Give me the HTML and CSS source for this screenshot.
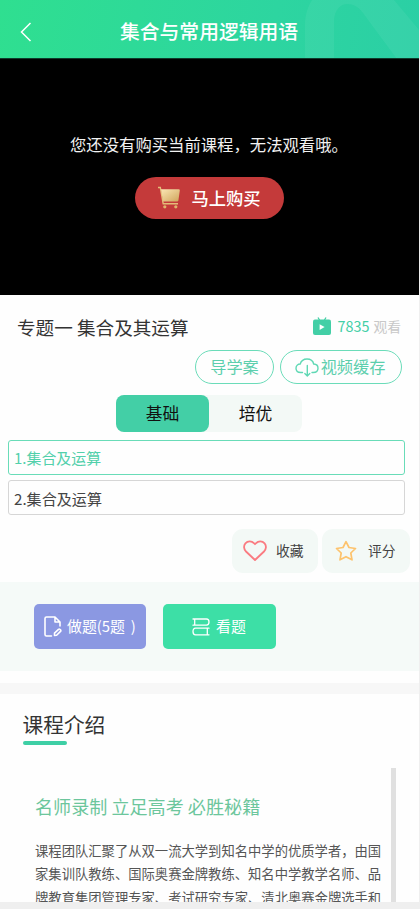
FILE: index.html
```html
<!DOCTYPE html>
<html lang="zh-CN">
<head>
<meta charset="utf-8">
<meta name="viewport" content="width=device-width, initial-scale=1">
<title>集合与常用逻辑用语</title>
<link rel="stylesheet" href="styles.css">
</head>
<body>
<main class="screen">
  <header class="header">
    <svg class="header-art" width="116" height="59" viewBox="0 0 116 59"><path d="M2 59V25C2 10 8 0 14-6H86L116 30V59H94L60 13C50-1 31 1 31 22V59Z" fill="#fff" fill-opacity=".055"/></svg>
    <svg class="back" width="12" height="20" viewBox="0 0 12 20"><path d="M10.5 1L1.5 10l9 9" fill="none" stroke="#fff" stroke-width="1.5"/></svg>
    <h1 class="header-title">集合与常用逻辑用语</h1>
  </header>

  <section class="player">
    <p class="notice">您还没有购买当前课程，无法观看哦。</p>
    <button class="buy">
      <svg width="24" height="24" viewBox="0 0 24 24">
        <defs><linearGradient id="gold" x1="0" y1="0" x2="1" y2="1"><stop offset="0" stop-color="#fbe7b5"/><stop offset="1" stop-color="#cfa45b"/></linearGradient></defs>
        <path d="M1 1.5h2.3L6.2 17.8H21" fill="none" stroke="#e4bd78" stroke-width="1.4"/>
        <path d="M4 3.2h17.6q1.4 0 1.2 1.3l-1.4 10q-.2 1-1.4 1H6.1z" fill="url(#gold)"/>
        <circle cx="7.8" cy="20.8" r="1.6" fill="#dfb56c"/><circle cx="18.8" cy="20.8" r="1.6" fill="#dfb56c"/>
      </svg>
      <span class="label">马上购买</span>
    </button>
  </section>

  <section class="lesson">
    <div class="lesson-head">
      <h2 class="lesson-title">专题一 集合及其运算</h2>
      <div class="views">
        <svg width="18" height="18" viewBox="0 0 18 18"><path d="M5 0.5l1.8 3M13 0.5l-1.8 3" stroke="#43cfa6" stroke-width="1.3"/><rect x="0" y="2.500" width="18" height="15.500" rx="2" fill="#43cfa6"/><path d="M6.6 7.2v5.8l5-2.9z" fill="#fff"/></svg>
        <span class="views-count">7835</span><span class="views-label">观看</span>
      </div>
    </div>
    <div class="pills">
      <button class="pill pill-guide"><span class="label">导学案</span></button>
      <button class="pill pill-cache">
        <svg width="24" height="19" viewBox="0 0 24 19" fill="none" stroke="#5fd8b4" stroke-width="1.4" stroke-linecap="round" stroke-linejoin="round"><path d="M7.5 14.5H5.8C2.8 14.5 1 12.6 1 10.2 1 7.8 2.9 6 5.2 6 6.1 3 8.7 1 12 1c3.4 0 6 2 6.7 5C21.3 6.1 23 7.9 23 10.2c0 2.5-1.9 4.3-4.8 4.3H17M12.300 7.500V17.700M9.800 15.600l2.500 2.300 2.500-2.300"/></svg>
        <span class="label">视频缓存</span>
      </button>
    </div>
    <div class="tabs">
      <button class="tab tab-active"><span class="label">基础</span></button>
      <button class="tab"><span class="label">培优</span></button>
    </div>
    <ul class="chapters">
      <li class="chapter chapter-active">1.集合及运算</li>
      <li class="chapter">2.集合及运算</li>
    </ul>
    <div class="actions">
      <button class="action action-like">
        <svg width="24" height="22" viewBox="0 0 24 22"><path d="M12 20L3 11.500C.7 9.200.4 5.600 2.400 3.300 4.800.7 8.800.9 10.900 3.200L12 4.200l1.100-1c2.100-2.300 6.100-2.500 8.500.1 2 2.300 1.700 5.900-.6 8.200Z" fill="none" stroke="#fa7b81" stroke-width="1.800" stroke-linejoin="round"/></svg>
        <span class="label">收藏</span>
      </button>
      <button class="action action-rate">
        <svg width="22" height="22" viewBox="0 0 22 22"><path d="M11 1.700l3 5.800 6.500 1-4.700 4.500 1.200 6.800-6-3.100-6 3.100L6.200 13 1.500 8.500l6.500-1z" fill="none" stroke="#fdc36d" stroke-width="1.700" stroke-linejoin="round"/></svg>
        <span class="label">评分</span>
      </button>
    </div>
  </section>

  <section class="practice">
    <button class="task task-do">
      <svg width="18" height="21" viewBox="0 0 18 21" fill="none" stroke="#fff" stroke-width="1.6" stroke-linejoin="round" stroke-linecap="round"><path d="M7.500 20H2.500Q1 20 1 18.500V2.500Q1 1 2.500 1H11l5 5v4M11 1v5h5"/><path d="M10.500 19.500v-2.400l4-3.800q.8-.6 1.600.2l.4.400q.7.800 0 1.500l-3.900 3.900z"/></svg>
      <span class="label">做题(5题 )</span>
    </button>
    <button class="task task-view">
      <svg width="18" height="18" viewBox="0 0 18 18" fill="none" stroke="#fff" stroke-width="1.3" stroke-linejoin="round" stroke-linecap="round"><path d="M1 1h13.500Q17 1 17 4t-2.500 3.200H1M2.700 1v6.200M17 10.200H3.500Q1 10.200 1 13.500T3.500 16.800H17M15.300 10.200v6.600"/></svg>
      <span class="label">看题</span>
    </button>
  </section>

  <section class="intro">
    <h2 class="intro-title">课程介绍</h2>
    <div class="intro-scroll">
      <article class="intro-copy">
        <h3 class="intro-slogan">名师录制 立足高考 必胜秘籍</h3>
        <p class="intro-text"><span>课程团队汇聚了从双一流大学到知名中学的优质学者，由国</span><span>家集训队教练、国际奥赛金牌教练、知名中学教学名师、品</span><span>牌教育集团管理专家、考试研究专家、清北奥赛金牌选手和</span></p>
      </article>
      <div class="scrollbar"></div>
    </div>
  </section>
</main>
</body>
</html>
```

FILE: styles.css
```css
* { box-sizing: border-box; }
body {
  margin: 0;
  height: 909px;
  overflow: hidden;
  background: #efefef;
  font-family: "Noto Sans CJK SC", sans-serif;
}
h1, h2, h3, p, ul { margin: 0; padding: 0; font-weight: 400; }
button { border: 0; padding: 0; margin: 0; font-family: inherit; color: inherit; background: none; white-space: nowrap; }
svg { display: block; flex: none; }
.label { display: block; padding-bottom: 2px; }

.screen {
  display: flex;
  flex-direction: column;
  width: 419px;
  height: 902px;
  overflow: hidden;
  background: #fefefe;
}

.header {
  position: relative;
  flex: none;
  display: flex;
  align-items: center;
  height: 58px;
  padding: 5px 0 0 20px;
  overflow: hidden;
  color: #fff;
  background: linear-gradient(100deg, #2fdf90, #2dd5a0 65%, #2bcfa5);
}
.header-art { position: absolute; top: 0; right: 0; }
.header-title {
  width: 180px;
  margin-left: 88px;
  padding-bottom: 1px;
  font-size: 19.8px;
  line-height: 28px;
  font-weight: 500;
  white-space: nowrap;
}

.player {
  flex: none;
  display: flex;
  flex-direction: column;
  align-items: center;
  height: 237px;
  padding-top: 74px;
  border-top: 1px solid #0d3a2b;
  background: #000;
}
.notice { width: 279px; margin-top: -1px; color: #f2f2f2; font-size: 16.35px; line-height: 24px; white-space: nowrap; }
.buy {
  display: flex;
  align-items: center;
  gap: 11px;
  width: 149px;
  height: 42px;
  margin-top: 21px;
  margin-right: 1px;
  padding-left: 22px;
  border-radius: 21px;
  background: #c43a3a;
  color: #fff;
  font-size: 17.3px;
  font-weight: 500;
}

.lesson { flex: none; height: 287px; padding: 18px 9px 0 8px; }
.lesson-head { display: flex; justify-content: space-between; height: 28px; padding: 0 9px; }
.lesson-title { color: #333; font-size: 18.6px; line-height: 27px; white-space: nowrap; }
.views { display: flex; align-items: center; height: 25px; white-space: nowrap; }
.views-count { margin-left: 6px; color: #43cfa6; font-size: 14.4px; }
.views-label { margin-left: 4px; color: #c8c8c8; font-size: 13.8px; }

.pills { display: flex; justify-content: flex-end; gap: 6px; margin-top: 9px; padding-right: 8px; }
.pill {
  display: flex;
  align-items: center;
  justify-content: center;
  height: 34px;
  border: 1.5px solid #6bdcb9;
  border-radius: 17px;
  color: #5ccfad;
  font-size: 16.2px;
}
.pill-guide { width: 79px; }
.pill-cache { width: 122px; gap: 2px; padding-right: 2px; }

.tabs { display: flex; width: 186px; height: 37px; margin: 11px 0 0 108px; border-radius: 8px; background: #f3f9f6; }
.tab { width: 93px; border-radius: 8px; color: #111; font-size: 16.8px; }
.tab-active { background: #43cfa6; }

.chapters { display: grid; gap: 5px; width: 397px; margin-top: 8px; list-style: none; }
.chapter {
  height: 35px;
  padding-left: 5px;
  border: 1.5px solid #d6d6d6;
  border-radius: 3px;
  color: #444;
  font-size: 15.1px;
  line-height: 34px;
}
.chapter-active { border-color: #69dcb8; color: #52d0ab; font-size: 14.95px; }

.actions { display: flex; justify-content: flex-end; gap: 4px; margin-top: 14px; }
.action { display: flex; align-items: center; height: 44px; border-radius: 11px; background: #f3f9f6; color: #444; font-size: 13.8px; }
.action-like { width: 86px; padding-left: 11px; gap: 9px; }
.action-rate { width: 88px; padding-left: 13px; gap: 11px; }

.practice { flex: none; display: flex; gap: 17px; height: 89px; padding: 22px 34px; background: #f5faf8; }
.task { display: flex; align-items: center; height: 45px; border-radius: 5px; color: #fff; font-size: 14.9px; }
.task-do { width: 112px; padding-left: 10px; gap: 5px; background: #8b98e2; word-spacing: 2.5px; }
.task-view { width: 113px; padding-left: 29px; gap: 6px; background: #3ddfa6; }

.intro { flex: none; margin-top: 12px; border-top: 11px solid #f7f7f7; height: 219px; padding-top: 15px; overflow: hidden; }
.intro-title { margin-left: 22.5px; color: #333; font-size: 20.7px; line-height: 30px; }
.intro-title::after { content: ""; display: block; width: 44px; height: 4px; margin-top: 2px; border-radius: 2px; background: #3ecfa5; }
.intro-scroll { display: flex; justify-content: space-between; height: 134px; margin-top: 23px; padding: 0 23px 0 35px; }
.intro-slogan { margin-top: 25px; color: #6cc69c; font-size: 18.1px; line-height: 27px; white-space: nowrap; }
.intro-text { margin-top: 19px; color: #555; font-size: 13.32px; line-height: 23.4px; white-space: nowrap; }
.intro-text span { display: block; }
.scrollbar { width: 5px; background: #e0e0e0; }
```
